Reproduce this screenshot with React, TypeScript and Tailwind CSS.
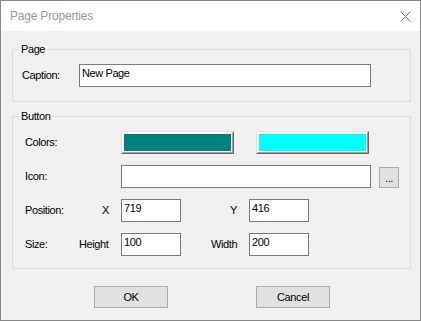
const txt = "font-['Liberation_Sans',Arial,sans-serif] text-[11px] leading-[13px] tracking-[-0.4px] text-black";

function ColorButton({ color }: { color: string }) {
  return (
    <div className="w-[113px] h-[23px] border border-t-[#e3e3e3] border-l-[#e3e3e3] border-b-[#696969] border-r-[#696969]">
      <div className="w-full h-full border border-t-white border-l-white border-b-[#a0a0a0] border-r-[#a0a0a0] p-[1px] bg-white">
        <div className="w-full h-full" style={{ backgroundColor: color }} />
      </div>
    </div>
  );
}

function Field({ w, value }: { w: string; value?: string }) {
  return (
    <div className={`${w} h-[23px] border border-[#7a7a7a] bg-white px-[2px] pt-[2px]`}>
      {value}
    </div>
  );
}

function PushButton({ label, className }: { label: string; className?: string }) {
  return (
    <div
      className={`w-[74px] h-[22px] border border-[#adadad] bg-[#e1e1e1] flex items-center justify-center ${className ?? ""}`}
    >
      {label}
    </div>
  );
}

export default function App() {
  return (
    <div className={`w-[421px] h-[321px] border border-[#868686] bg-[#f0f0f0] flex flex-col ${txt}`}>
      {/* Title bar */}
      <div className="h-[30px] bg-white flex items-center justify-between pl-[9px] pr-[9px]">
        <span className="text-[12px] tracking-[-0.2px] text-[#9a9a9a]">Page Properties</span>
        <svg width="11" height="11" viewBox="0 0 11 11" className="mt-[1px]">
          <path d="M0.5 0.5 L10.5 10.5 M10.5 0.5 L0.5 10.5" stroke="#777" strokeWidth="1" />
        </svg>
      </div>

      {/* Body */}
      <div className="flex flex-col pl-[11px] pt-[12px]">
        {/* Page group */}
        <fieldset className="w-[399px] border border-[#dcdcdc] pb-[14px]">
          <legend className="ml-[6px] px-[2px]">Page</legend>
          <div className="mt-[8px] flex items-center pl-[9px]">
            <span className="w-[57px]">Caption:</span>
            <Field w="w-[292px]" value="New Page" />
          </div>
        </fieldset>

        {/* Button group */}
        <fieldset className="mt-[8px] w-[399px] border border-[#dcdcdc] pb-[12px]">
          <legend className="ml-[6px] px-[2px]">Button</legend>
          <div className="mt-[8px] flex items-center pl-[12px]">
            <span className="w-[96px]">Colors:</span>
            <ColorButton color="#008080" />
            <div className="ml-[22px]">
              <ColorButton color="#00ffff" />
            </div>
          </div>
          <div className="mt-[11px] flex items-center pl-[12px]">
            <span className="w-[96px]">Icon:</span>
            <Field w="w-[250px]" />
            <div className="ml-[8px] mt-[1px] w-[20px] h-[21px] border border-[#adadad] bg-[#e1e1e1] flex items-center justify-center pt-[3px]">
              ...
            </div>
          </div>
          <div className="mt-[11px] flex items-center pl-[12px]">
            <span className="w-[77px]">Position:</span>
            <span className="w-[19px]">X</span>
            <Field w="w-[60px]" value="719" />
            <span className="ml-[49px] w-[19px]">Y</span>
            <Field w="w-[60px]" value="416" />
          </div>
          <div className="mt-[11px] flex items-center pl-[12px]">
            <span className="w-[54px]">Size:</span>
            <span className="w-[42px]">Height</span>
            <Field w="w-[60px]" value="100" />
            <span className="ml-[30px] w-[38px]">Width</span>
            <Field w="w-[60px]" value="200" />
          </div>
        </fieldset>

        {/* Dialog buttons */}
        <div className="mt-[17px] flex">
          <PushButton label="OK" className="ml-[82px]" />
          <PushButton label="Cancel" className="ml-[88px]" />
        </div>
      </div>
    </div>
  );
}
